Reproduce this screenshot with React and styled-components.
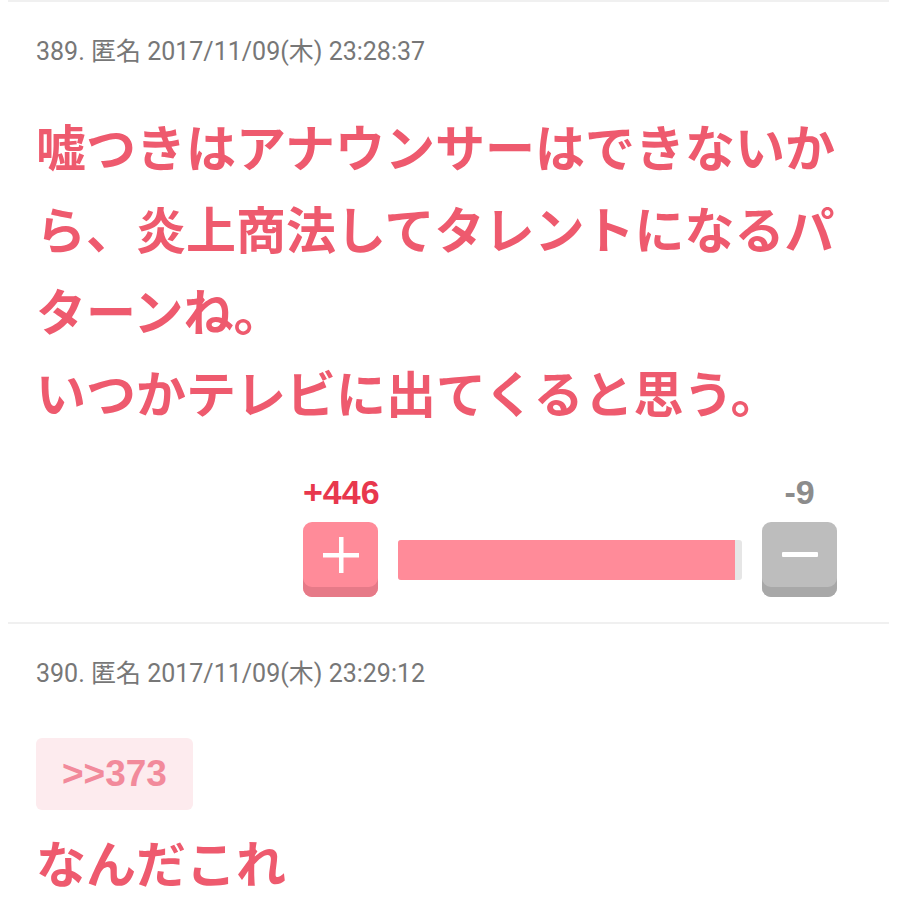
import styled, { createGlobalStyle } from 'styled-components';

const GlobalStyle = createGlobalStyle`
    body {
        margin: 0;
        background: #ffffff;
        font-family: Roboto, "Noto Sans CJK JP", sans-serif;
    }
`;

const Thread = styled.div`
    padding: 0 8px;
`;

const Post = styled.article`
    border-top: 2px solid #f0f0f0;
    padding: 33px 28px 25px;
`;

const Meta = styled.div`
    font-family: Roboto, "Noto Sans CJK JP", sans-serif;
    font-size: 25px;
    line-height: 34px;
    color: #777777;
`;

const Body = styled.div`
    margin-top: ${(props) => props.$gap || 35}px;
    font-family: "Noto Sans CJK JP", sans-serif;
    font-weight: 700;
    font-size: 50px;
    line-height: 82px;
    color: #ee5a6e;
`;

const Anchor = styled.span`
    display: inline-block;
    padding: 0 26px;
    height: 72px;
    line-height: 72px;
    border-radius: 6px;
    background: #fdebee;
    font-family: "Liberation Sans", Arial, sans-serif;
    font-size: 37px;
    font-weight: 700;
    color: #f28a9b;
    vertical-align: top;
`;

const Text = styled.div``;

const Vote = styled.div`
    width: 534px;
    margin: 42px 24px 0 auto;
    display: grid;
    grid-template-columns: 75px 1fr 75px;
    column-gap: 20px;
    row-gap: 12px;
    align-items: center;
`;

const Count = styled.div`
    grid-column: ${(props) => props.$col};
    text-align: center;
    font-family: "Liberation Sans", Arial, sans-serif;
    font-weight: 700;
    font-size: 34px;
    line-height: 36px;
    color: ${(props) => props.$color};
`;

const VoteButton = styled.button`
    grid-row: 2;
    width: 75px;
    height: 75px;
    padding: 0 0 10px;
    border: none;
    border-radius: 9px;
    background: ${(props) => props.$face};
    box-shadow: inset 0 -10px 0 ${(props) => props.$edge};
    display: flex;
    align-items: center;
    justify-content: center;
`;

const Bar = styled.div`
    grid-row: 2;
    height: 40px;
    border-radius: 3px;
    background: #e6e6e6;
    overflow: hidden;
`;

const BarFill = styled.div`
    height: 100%;
    background: #ff8b99;
`;

const PlusIcon = () => (
    <svg width="36" height="36" viewBox="0 0 36 36">
        <rect x="0" y="16" width="36" height="4.5" fill="#fff" />
        <rect x="16" y="0" width="4.5" height="36" fill="#fff" />
    </svg>
);

const MinusIcon = () => (
    <svg width="36" height="6" viewBox="0 0 36 6">
        <rect x="0" y="0" width="36" height="5" rx="1" fill="#fff" />
    </svg>
);

const Voting = ({ plus, minus }) => {
    const ratio = (plus / (plus + minus)) * 100;
    return (
        <Vote>
            <Count $col={1} $color="#e8374d">+{plus}</Count>
            <Count $col={3} $color="#8c8c8c">-{minus}</Count>
            <VoteButton $face="#ff8b99" $edge="#e67a88">
                <PlusIcon />
            </VoteButton>
            <Bar>
                <BarFill style={{ width: `${ratio}%` }} />
            </Bar>
            <VoteButton $face="#bdbdbd" $edge="#a8a8a8">
                <MinusIcon />
            </VoteButton>
        </Vote>
    );
};

const App = () => (
    <>
        <GlobalStyle />
        <Thread>
            <Post>
                <Meta>389. 匿名 2017/11/09(木) 23:28:37</Meta>
                <Body>
                    <Text>嘘つきはアナウンサーはできないから、炎上商法してタレントになるパターンね。</Text>
                    <Text>いつかテレビに出てくると思う。</Text>
                </Body>
                <Voting plus={446} minus={9} />
            </Post>
            <Post>
                <Meta>390. 匿名 2017/11/09(木) 23:29:12</Meta>
                <Body $gap={47}>
                    <Anchor>&gt;&gt;373</Anchor>
                    <Text>なんだこれ</Text>
                </Body>
            </Post>
        </Thread>
    </>
);

export default App;
